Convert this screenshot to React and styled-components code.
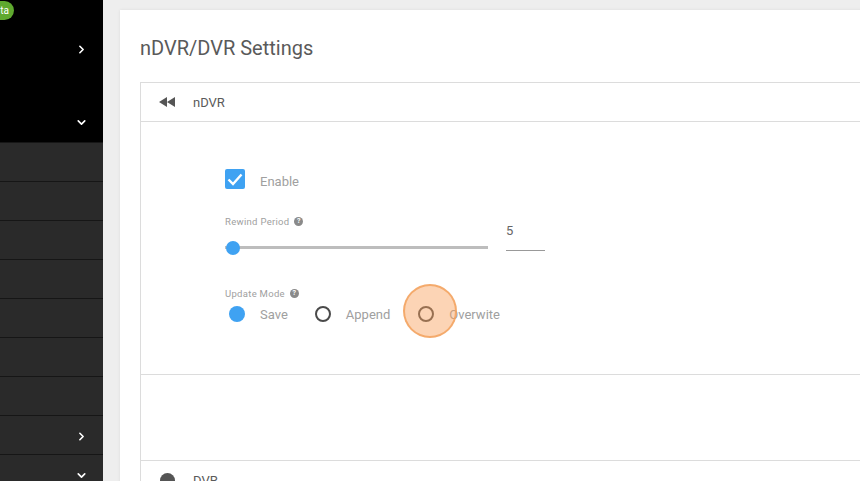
import React from 'react'
import styled, { createGlobalStyle } from 'styled-components'
import { ChevronRight, ChevronDown } from 'lucide-react'

const GlobalStyle = createGlobalStyle`
  html, body {
    margin: 0;
    height: 100%;
    overflow: hidden;
    background: #eeeeee;
    font-family: Roboto, "Liberation Sans", sans-serif;
  }
  * { box-sizing: border-box; }
`

const Page = styled.div`
  display: flex;
  width: 860px;
  height: 481px;
  overflow: hidden;
`

const Sidebar = styled.aside`
  position: relative;
  flex: 0 0 103px;
  background: #2a2a2a;
  overflow: hidden;
`

const Badge = styled.span`
  position: absolute;
  left: -14px;
  top: 1px;
  width: 28px;
  height: 19px;
  border-radius: 10px;
  background: #5fa92f;
  color: #fff;
  font-size: 10px;
  line-height: 19px;
  text-align: right;
  padding-right: 5px;
`

const TopMenu = styled.div`
  height: 142px;
  background: #000;
  overflow: hidden;
`

const TopItem = styled.div`
  height: ${(p) => p.$height}px;
  display: flex;
  align-items: center;
  justify-content: flex-end;
  padding-right: 15px;
  color: #fff;
`

const RowList = styled.div`
  border-top: 1px solid #161616;
`

const Row = styled.div`
  height: 39px;
  padding: 2px 15px 0 0;
  border-bottom: 1px solid #161616;
  display: flex;
  align-items: center;
  justify-content: flex-end;
  color: #fff;
`

const Main = styled.main`
  flex: 1;
  padding: 10px 0 0 17px;
  min-width: 0;
`

const Card = styled.section`
  background: #fff;
  width: 800px;
  height: 520px;
  padding: 25px 0 0 20px;
  box-shadow: 0 0 3px rgba(0, 0, 0, 0.08);
`

const Title = styled.h1`
  margin: 0 0 20px;
  font-size: 20px;
  line-height: 27px;
  font-weight: 400;
  color: #5a5a5a;
`

const Panel = styled.div`
  border: 1px solid #dcdcdc;
  border-right: 0;
  width: 780px;
`

const PanelHeader = styled.div`
  height: 39px;
  display: flex;
  align-items: center;
  padding-left: 17px;
  gap: 17px;
  font-size: 13px;
  color: #5a5a5a;
  border-bottom: 1px solid #dcdcdc;
`

const IconSlot = styled.span`
  display: flex;
  align-items: center;
  justify-content: center;
  width: 18px;
  height: 14px;
`

const DvrDot = styled.span`
  flex: none;
  width: 15px;
  height: 15px;
  border-radius: 50%;
  background: #555;
`

const PanelBody = styled.div`
  height: 253px;
  padding: 47px 0 0 84px;
  border-bottom: 1px solid #dcdcdc;
`

const Spacer = styled.div`
  height: 86px;
  border-bottom: 1px solid #dcdcdc;
`

const CheckRow = styled.label`
  display: flex;
  align-items: center;
  height: 20px;
  gap: 15px;
  margin-bottom: 26px;
  font-size: 13px;
  color: #a0a0a0;
`

const CheckText = styled.span`
  padding-top: 4px;
`

const CheckBox = styled.span`
  width: 20px;
  height: 20px;
  border-radius: 2px;
  background: #3fa2f2;
  display: flex;
  align-items: center;
  justify-content: center;
`

const FieldLabel = styled.div`
  display: flex;
  align-items: center;
  gap: 5px;
  height: 13px;
  margin-top: ${(p) => p.$shift || 0}px;
  font-size: 9.5px;
  letter-spacing: 0.3px;
  color: #a0a0a0;
`

const Help = styled.span`
  width: 9px;
  height: 9px;
  border-radius: 50%;
  background: #8a8a8a;
  color: #fff;
  font-size: 7px;
  font-weight: 700;
  line-height: 9px;
  text-align: center;
`

const SliderRow = styled.div`
  display: flex;
  align-items: flex-end;
  height: 23px;
  margin-bottom: 37px;
`

const Track = styled.div`
  position: relative;
  width: 263px;
  height: 3px;
  background: #bdbdbd;
  margin: 0 18px 2px 0;
`

const Thumb = styled.span`
  position: absolute;
  left: 1px;
  top: -5px;
  width: 14px;
  height: 14px;
  border-radius: 50%;
  background: #3fa2f2;
`

const NumberInput = styled.div`
  flex: none;
  width: 39px;
  height: 31px;
  padding-top: 1px;
  border-bottom: 1px solid #999;
  font-size: 13px;
  line-height: 20px;
  color: #666;
`

const RadioGroup = styled.div`
  display: flex;
  align-items: center;
  height: 24px;
  margin-top: 2px;
`

const RadioItem = styled.div`
  position: relative;
  display: flex;
  align-items: center;
  gap: 15px;
  margin-left: 4px;
  margin-right: ${(p) => p.$gap}px;
  font-size: 13px;
  color: #a0a0a0;
`

const Radio = styled.span`
  width: 16px;
  height: 16px;
  border-radius: 50%;
  border: ${(p) => (p.$checked ? '0' : '2px solid #4a4a4a')};
  background: ${(p) => (p.$checked ? '#3fa2f2' : 'transparent')};
`

const ClickMark = styled.span`
  position: absolute;
  left: -15px;
  top: -22px;
  width: 54px;
  height: 54px;
  border-radius: 50%;
  background: rgba(248, 160, 90, 0.45);
  border: 2px solid rgba(243, 160, 90, 0.8);
`

const Rewind = () => (
  <svg width="16" height="10" viewBox="0 0 16 10" fill="#555">
    <path d="M8 0v10L0 5zM16 0v10L8 5z" />
  </svg>
)

const Tick = () => (
  <svg width="16" height="13" viewBox="0 0 16 13" fill="none" stroke="#fff" strokeWidth="2.4">
    <path d="M1.5 6.5l4.5 4.5 8.5-9.5" />
  </svg>
)

const rows = [0, 1, 2, 3, 4, 5, 6]

export default function App() {
  return (
    <Page>
      <GlobalStyle />
      <Sidebar>
        <Badge>ta</Badge>
        <TopMenu>
          <TopItem $height={98}>
            <ChevronRight size={13} strokeWidth={3} />
          </TopItem>
          <TopItem $height={48}>
            <ChevronDown size={13} strokeWidth={3} />
          </TopItem>
        </TopMenu>
        <RowList>
          {rows.map((r) => (
            <Row key={r} />
          ))}
          <Row>
            <ChevronRight size={13} strokeWidth={3} />
          </Row>
          <Row>
            <ChevronDown size={13} strokeWidth={3} />
          </Row>
        </RowList>
      </Sidebar>
      <Main>
        <Card>
          <Title>nDVR/DVR Settings</Title>
          <Panel>
            <PanelHeader>
              <IconSlot>
                <Rewind />
              </IconSlot>
              nDVR
            </PanelHeader>
            <PanelBody>
              <CheckRow>
                <CheckBox>
                  <Tick />
                </CheckBox>
                <CheckText>Enable</CheckText>
              </CheckRow>
              <FieldLabel>
                Rewind Period <Help>?</Help>
              </FieldLabel>
              <SliderRow>
                <Track>
                  <Thumb />
                </Track>
                <NumberInput>5</NumberInput>
              </SliderRow>
              <FieldLabel $shift={-1}>
                Update Mode <Help>?</Help>
              </FieldLabel>
              <RadioGroup>
                <RadioItem $gap={23}>
                  <Radio $checked />
                  Save
                </RadioItem>
                <RadioItem $gap={24}>
                  <Radio />
                  Append
                </RadioItem>
                <RadioItem $gap={0}>
                  <ClickMark />
                  <Radio />
                  Overwite
                </RadioItem>
              </RadioGroup>
            </PanelBody>
            <Spacer />
            <PanelHeader>
              <IconSlot>
                <DvrDot />
              </IconSlot>
              DVR
            </PanelHeader>
          </Panel>
        </Card>
      </Main>
    </Page>
  )
}
